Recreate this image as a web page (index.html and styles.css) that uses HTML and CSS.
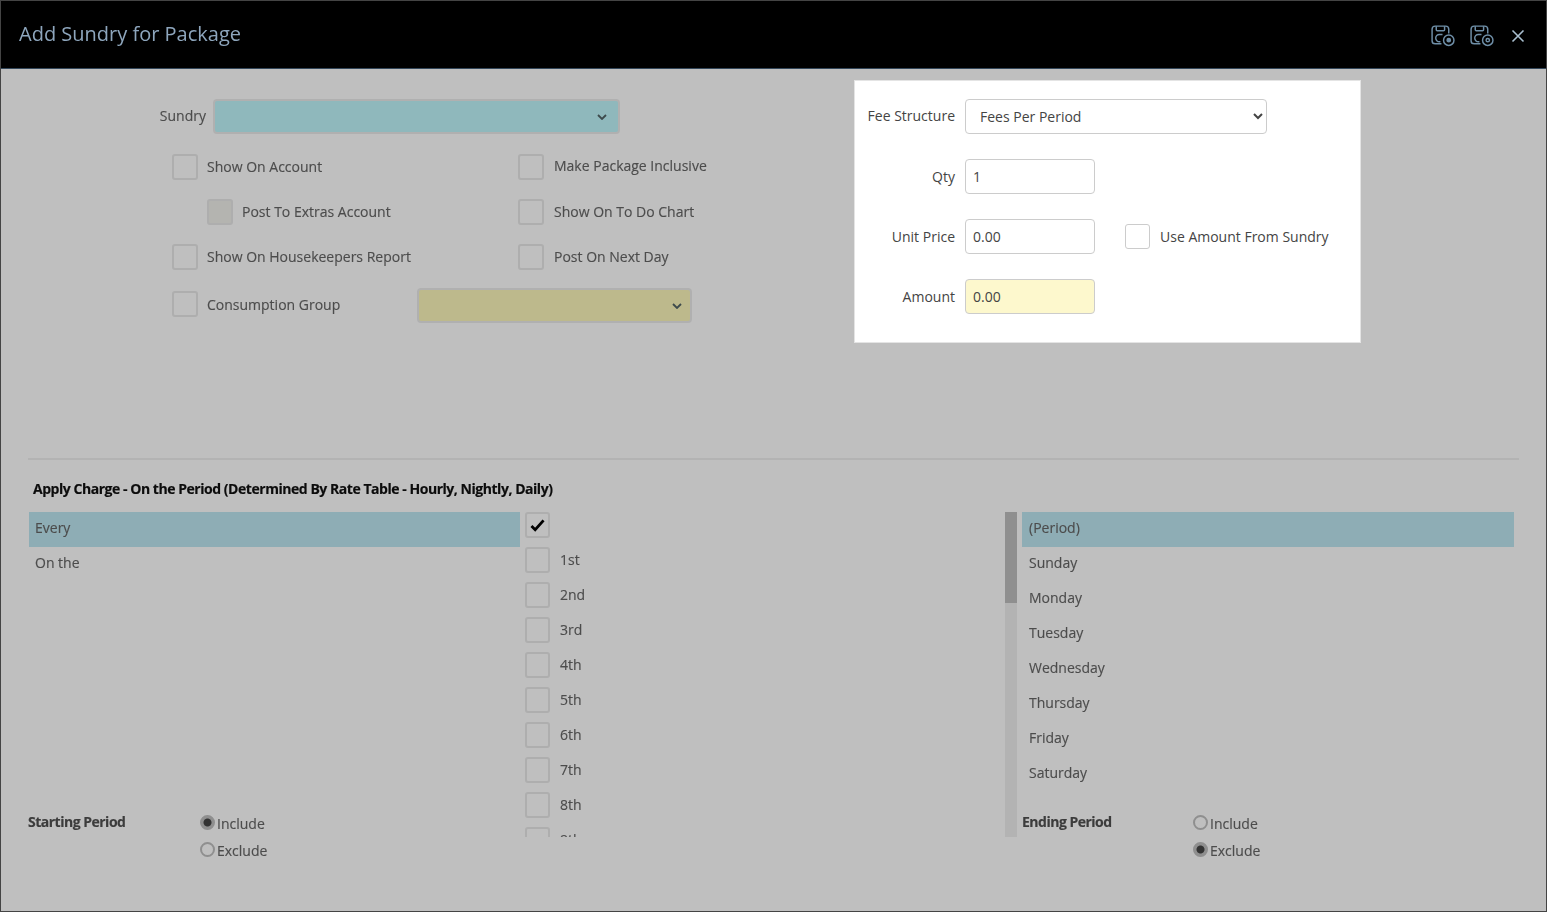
FILE: index.html
```html
<!DOCTYPE html>
<html lang="en">
<head>
  <meta charset="UTF-8">
  <meta name="viewport" content="width=device-width, initial-scale=1.0">
  <title>Add Sundry for Package</title>
  <link rel="stylesheet" href="styles.css">
</head>
<body>
<div class="window">
  <header class="titlebar">
    <h1 class="title">Add Sundry for Package</h1>
    <div class="actions">
      <svg class="icon" viewBox="0 0 24 24"><path d="M11 20H5a3 3 0 0 1-3-3V6a3 3 0 0 1 3-3h10a3 3 0 0 1 3 3v4"/><path d="M6 3v3.5a1 1 0 0 0 1 1h6a1 1 0 0 0 1-1V3"/><path d="M12 11H9a3.5 3.5 0 0 0 0 7h1"/><circle cx="18" cy="16.500" r="5"/><circle cx="18" cy="16.500" r="1.6" class="icon-dot"/></svg>
      <svg class="icon" viewBox="0 0 24 24"><path d="M11 20H5a3 3 0 0 1-3-3V6a3 3 0 0 1 3-3h10a3 3 0 0 1 3 3v4"/><path d="M6 3v3.5a1 1 0 0 0 1 1h6a1 1 0 0 0 1-1V3"/><path d="M12 11H9a3.5 3.5 0 0 0 0 7h1"/><circle cx="18" cy="16.500" r="5"/><circle cx="18" cy="16.500" r="1.6"/></svg>
      <svg class="close" viewBox="0 0 14 14"><path d="M1.5 1.5l11 11M12.5 1.5l-11 11"/></svg>
    </div>
  </header>

  <div class="top">
    <section class="form dim">
      <div class="sundry-row">
        <label class="sundry-label">Sundry</label>
        <div class="drop drop-sundry"><svg class="chev" viewBox="0 0 10 6"><path d="M1 1l4 4 4-4"/></svg></div>
      </div>
      <div class="flags">
        <label class="check"><span class="box"></span>Show On Account</label>
        <label class="check check-r"><span class="box"></span><span class="raised">Make Package Inclusive</span></label>
        <label class="check check-sub"><span class="box box-off"></span>Post To Extras Account</label>
        <label class="check check-r"><span class="box"></span>Show On To Do Chart</label>
        <label class="check"><span class="box"></span>Show On Housekeepers Report</label>
        <label class="check check-r"><span class="box"></span>Post On Next Day</label>
        <div class="consumption">
          <label class="check"><span class="box"></span>Consumption Group</label>
          <div class="drop drop-group"><svg class="chev" viewBox="0 0 10 6"><path d="M1 1l4 4 4-4"/></svg></div>
        </div>
      </div>
    </section>

    <section class="panel">
      <div class="field">
        <label class="field-label raised-1">Fee Structure</label>
        <select class="input fee-select"><option>Fees Per Period</option></select>
      </div>
      <div class="field">
        <label class="field-label">Qty</label>
        <input class="input" type="text" value="1">
      </div>
      <div class="field">
        <label class="field-label">Unit Price</label>
        <input class="input" type="text" value="0.00">
        <label class="use-amount"><span class="box box-light"></span>Use Amount From Sundry</label>
      </div>
      <div class="field">
        <label class="field-label">Amount</label>
        <input class="input input-total" type="text" value="0.00">
      </div>
    </section>
  </div>

  <section class="apply dim">
    <h2 class="apply-title">Apply Charge - On the Period (Determined By Rate Table - Hourly, Nightly, Daily)</h2>
    <div class="columns">
      <div class="col">
        <ul class="list list-left">
          <li class="selected">Every</li>
          <li>On the</li>
        </ul>
        <div class="period">
          <strong class="period-name">Starting Period</strong>
          <div class="radios">
            <label class="radio-row"><span class="radio on"></span>Include</label>
            <label class="radio-row"><span class="radio"></span>Exclude</label>
          </div>
        </div>
      </div>

      <div class="col days">
        <div class="days-list">
          <label class="day"><span class="box"><svg class="tick" viewBox="0 0 16 14"><path d="M1.5 7.5l4 4 9-10"/></svg></span></label>
          <label class="day"><span class="box"></span>1st</label>
          <label class="day"><span class="box"></span>2nd</label>
          <label class="day"><span class="box"></span>3rd</label>
          <label class="day"><span class="box"></span>4th</label>
          <label class="day"><span class="box"></span>5th</label>
          <label class="day"><span class="box"></span>6th</label>
          <label class="day"><span class="box"></span>7th</label>
          <label class="day"><span class="box"></span>8th</label>
          <label class="day"><span class="box"></span>9th</label>
        </div>
        <div class="scrollbar"><div class="thumb"></div></div>
      </div>

      <div class="col">
        <ul class="list">
          <li class="selected">(Period)</li>
          <li>Sunday</li>
          <li>Monday</li>
          <li>Tuesday</li>
          <li>Wednesday</li>
          <li>Thursday</li>
          <li>Friday</li>
          <li>Saturday</li>
        </ul>
        <div class="period period-end">
          <strong class="period-name">Ending Period</strong>
          <div class="radios">
            <label class="radio-row"><span class="radio"></span>Include</label>
            <label class="radio-row"><span class="radio on"></span>Exclude</label>
          </div>
        </div>
      </div>
    </div>
  </section>
</div>
</body>
</html>
```

FILE: styles.css
```css
* { box-sizing: border-box; }
body {
  margin: 0;
  font-family: "Open Sans", sans-serif;
  font-size: 14px;
  color: #4c4c4c;
}
.window {
  width: 1547px;
  height: 912px;
  border: 1px solid #444;
  background: #bfbfbf;
  overflow: hidden;
}
.titlebar {
  height: 68px;
  background: #000;
  border-bottom: 1px solid #33475a;
  display: flex;
  align-items: center;
  justify-content: space-between;
  padding: 0 21px 0 18px;
}
.title {
  margin: -2px 0 0;
  font-size: 20px;
  font-weight: 400;
  color: #8ea6bd;
  filter: blur(0.3px);
}
.actions { display: flex; align-items: center; gap: 14px; margin-top: 2px; filter: blur(0.3px); }
.icon {
  width: 25px;
  height: 25px;
  fill: none;
  stroke: #6f8fa8;
  stroke-width: 1.4;
}
.icon-dot { fill: #6f8fa8; }
.close {
  width: 14px;
  height: 14px;
  margin-left: 3px;
  fill: none;
  stroke: #a9bfcf;
  stroke-width: 1.6;
}
.dim { filter: blur(0.45px); -webkit-text-stroke: 0.15px; }
.raised { margin-top: -3px; }
.raised-1 { margin-top: -2px; }

/* top area */
.top { display: flex; height: 389px; }
.form { width: 853px; padding-top: 30px; }
.sundry-row { display: flex; align-items: center; }
.sundry-label { width: 205px; margin: -2px 7px 0 0; text-align: right; }
.drop {
  position: relative;
  height: 35px;
  border: 2px solid #b0b0b0;
  border-radius: 4px;
}
.drop-sundry { width: 407px; background: #8fb8bc; }
.drop-group { width: 275px; margin-top: 2px; background: #bdb98c; }
.chev {
  position: absolute;
  top: 13px;
  right: 11px;
  width: 10px;
  height: 6px;
  fill: none;
  stroke: #3d4a4c;
  stroke-width: 1.8;
}
.drop-group .chev { right: 8px; }
.flags {
  display: grid;
  grid-template-columns: 346px 1fr;
  grid-auto-rows: 45px;
  margin-top: 10px;
  padding-left: 171px;
}
.check { display: flex; align-items: center; gap: 9px; }
.check-r { gap: 10px; }
.check-sub { padding-left: 35px; }
.box {
  flex: none;
  display: flex;
  align-items: center;
  justify-content: center;
  width: 26px;
  height: 26px;
  border: 2px solid #aeaeae;
  border-radius: 3px;
}
.box-off { background: #b4b4b0; }
.box-light { width: 25px; height: 25px; border: 1px solid #ccc; background: #fff; }
.consumption {
  grid-column: 1 / 3;
  display: flex;
  align-items: center;
  margin-top: 5px;
}
.consumption .check { width: 245px; }

/* highlighted panel */
.panel {
  width: 507px;
  height: 263px;
  margin-top: 11px;
  padding-top: 18px;
  background: #fff;
  border: 1px solid #e4e4e4;
  color: #444;
}
.field { display: flex; align-items: center; height: 35px; margin-bottom: 25px; }
.field-label { width: 100px; margin-right: 10px; text-align: right; }
.input {
  width: 130px;
  height: 35px;
  padding: 0 7px;
  border: 1px solid #ccc;
  border-radius: 4px;
  background: #fff;
  font: inherit;
  color: #444;
}
.fee-select { width: 302px; padding-left: 10px; }
.input-total { background: #fdf8cd; }
.use-amount { display: flex; align-items: center; gap: 10px; margin-left: 30px; }

/* apply charge */
.apply { padding: 0 27px; }
.apply-title {
  margin: 0;
  padding-top: 19px;
  height: 54px;
  border-top: 2px solid #b3b3b3;
  font-size: 14px;
  line-height: 19px;
  letter-spacing: -0.46px;
  color: #0c0c0c;
  text-indent: 5px;
}
.columns {
  display: grid;
  grid-template-columns: 492px 492px 492px;
  column-gap: 5px;
  height: 352px;
}
.list { list-style: none; margin: 0; padding: 0; height: 280px; }
.list-left { margin-left: 1px; }
.list li {
  height: 35px;
  padding-left: 7px;
  line-height: 32px;
}
.list-left li { padding-left: 6px; }
.list .selected { background: #8eadb5; }
.period { display: flex; padding-top: 20px; }
.period-name { width: 172px; line-height: 20px; letter-spacing: -0.5px; color: #3c3c3c; }
.period-end .period-name { width: 171px; }
.radios { display: flex; flex-direction: column; gap: 7px; padding-top: 1px; }
.radio-row { display: flex; align-items: center; gap: 2px; height: 20px; }
.radio {
  flex: none;
  width: 15px;
  height: 15px;
  margin-top: -2px;
  border: 2px solid #8f8f8f;
  border-radius: 50%;
}
.radio.on {
  background: radial-gradient(circle, #333 0 3.5px, #8f8f8f 4.5px);
}
.days { display: flex; height: 325px; overflow: hidden; }
.days-list { flex: 1; }
.day { display: flex; gap: 10px; height: 35px; line-height: 26px; }
.day .box { width: 25px; }
.scrollbar { width: 12px; height: 325px; background: #b3b3b3; }
.thumb { height: 91px; background: #8f8f8f; }
.tick {
  width: 15px;
  height: 13px;
  fill: none;
  stroke: #000;
  stroke-width: 3;
}
```
